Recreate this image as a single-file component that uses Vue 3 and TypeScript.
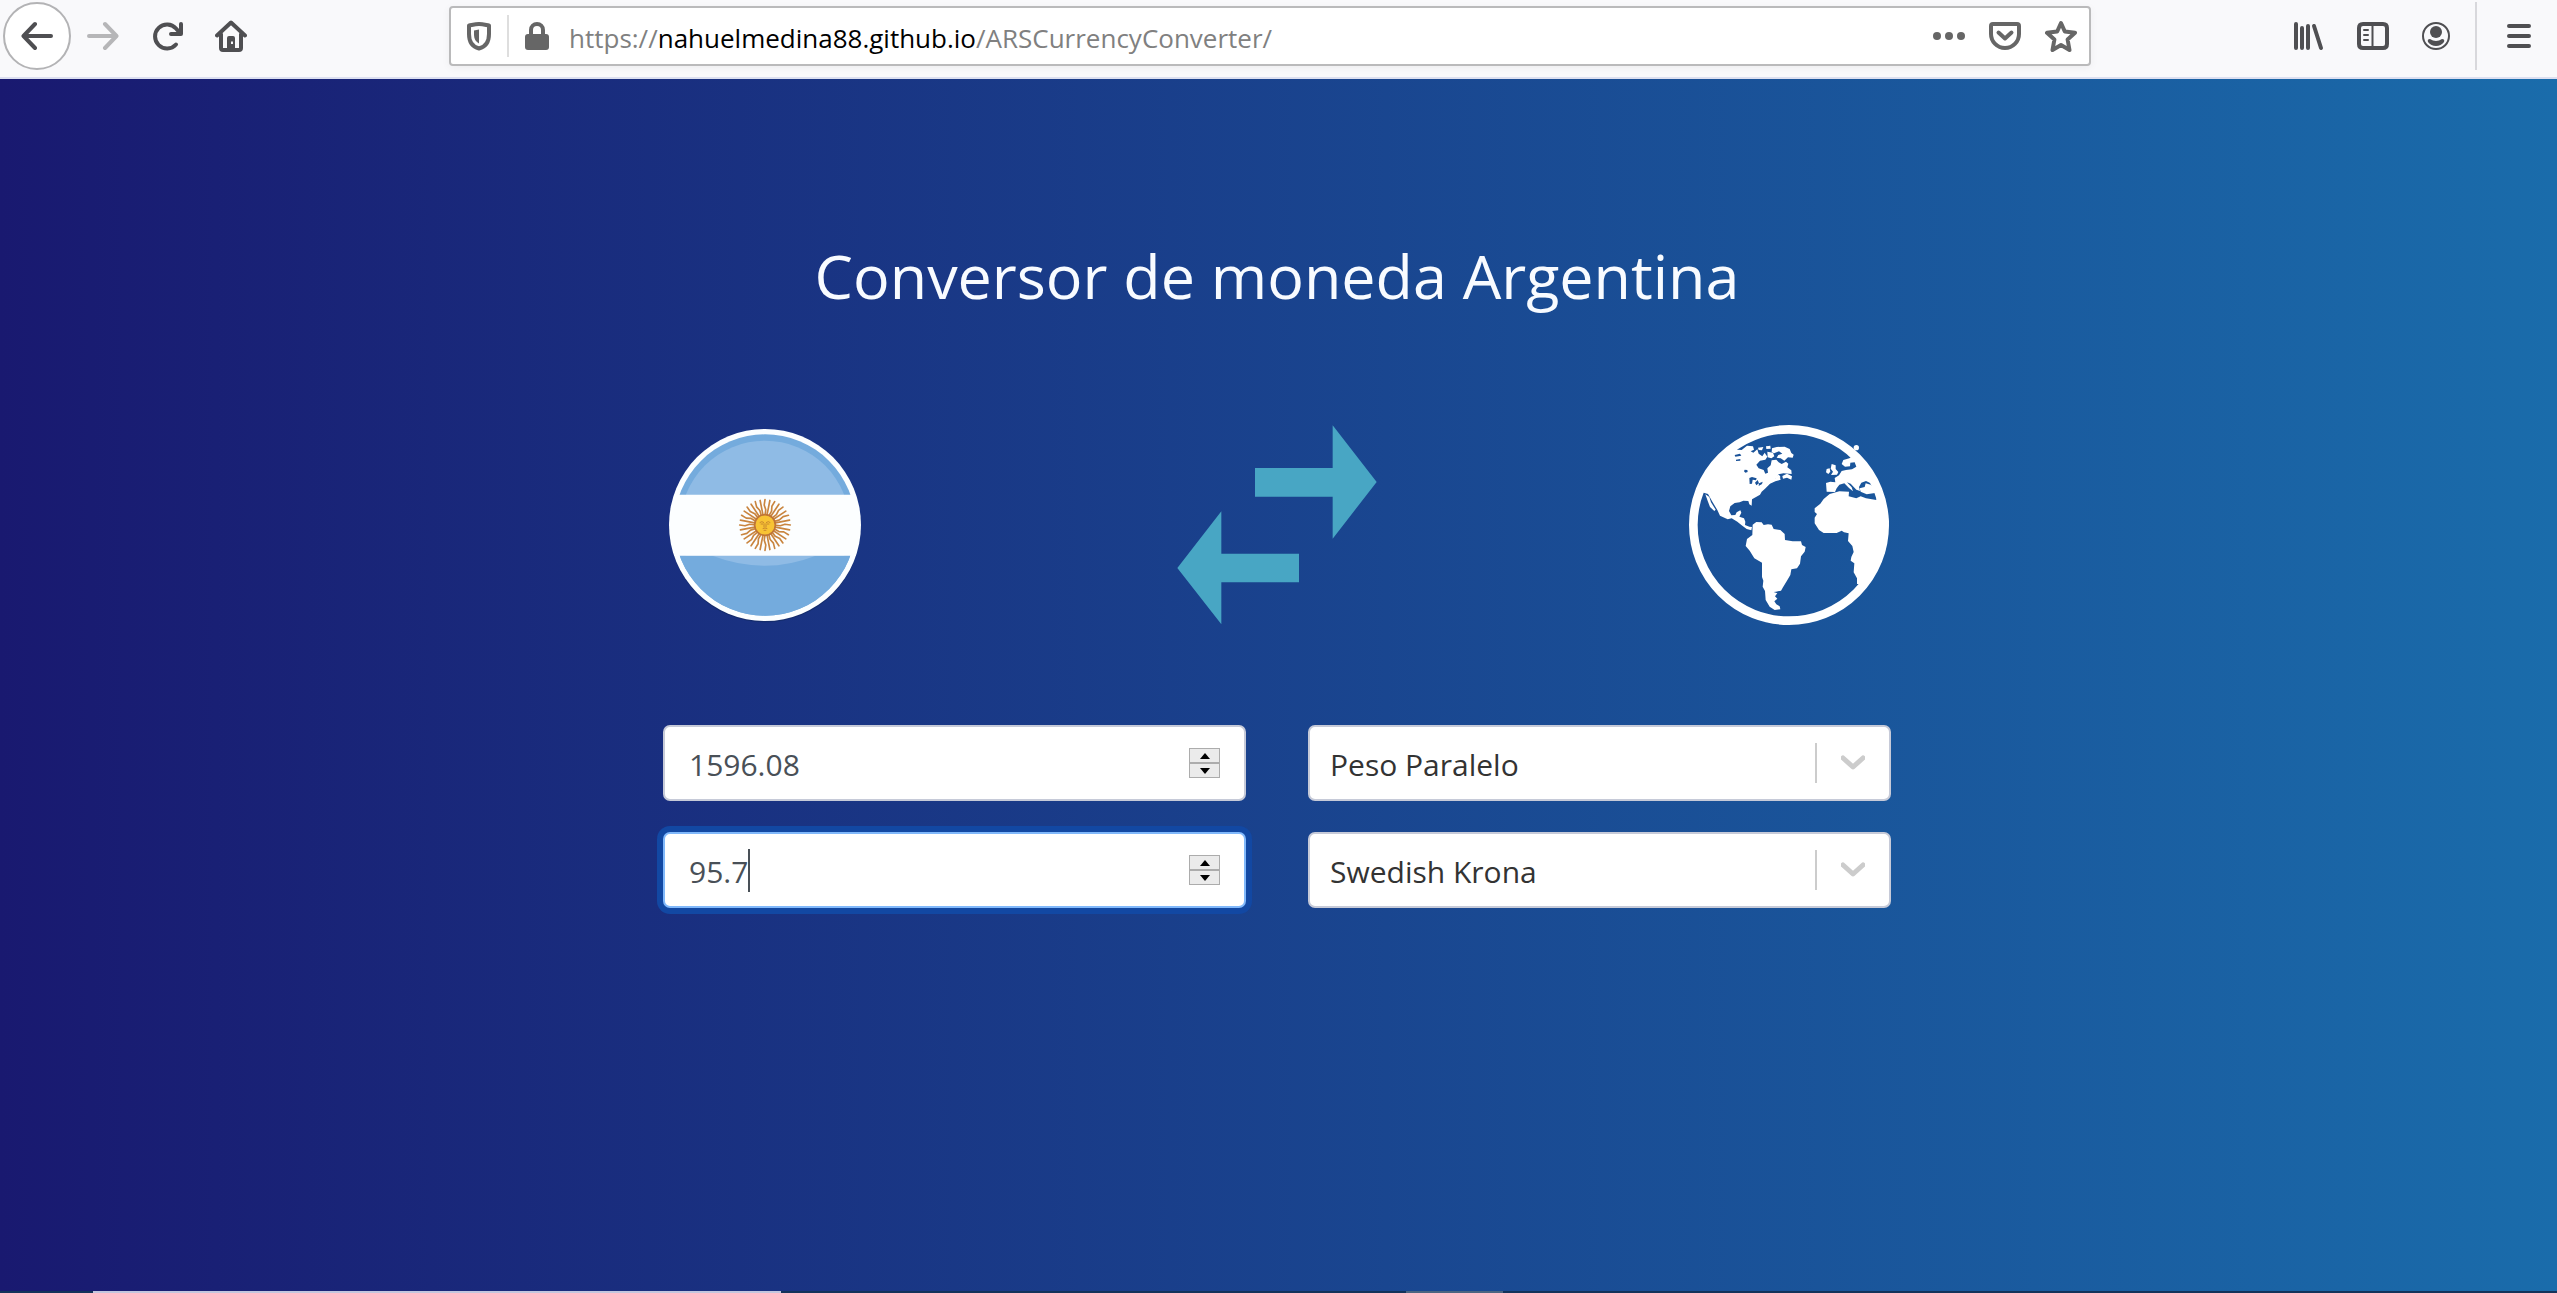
<script setup lang="ts">
import { ref } from 'vue'

interface AmountField {
  id: string
  label: string
  value: number
  focused: boolean
}

const amounts = ref<AmountField[]>([
  { id: 'amount-ars', label: 'Monto en pesos', value: 1596.08, focused: false },
  { id: 'amount-foreign', label: 'Monto en moneda extranjera', value: 95.7, focused: true },
])

const currencies = ref([
  { id: 'rate', label: 'Tipo de cambio', value: 'Peso Paralelo' },
  { id: 'currency', label: 'Moneda', value: 'Swedish Krona' },
])

function step(field: AmountField, delta: number) {
  field.value = Math.round((field.value + delta) * 100) / 100
}

// The sun's rays, alternating between straight and wavy ones.
const rays = Array.from({ length: 32 }, (_, i) => {
  const a = (i * Math.PI) / 16
  const b = a + 0.05
  const point = (r: number, t: number) => `${(346 + r * Math.cos(t)).toFixed(1)} ${(343 + r * Math.sin(t)).toFixed(1)}`
  return i % 2
    ? `M${point(28, a)}L${point(75, a)}`
    : `M${point(28, a)}L${point(46, b)}L${point(60, a - 0.04)}L${point(76, a)}`
}).join('')
</script>

<template>
  <div class="window">
    <header class="toolbar">
      <button class="back" type="button" aria-label="Back">
        <svg class="icon" viewBox="0 0 32 32"><path d="M14 4 2.500 16 14 28M3 16H30" /></svg>
      </button>
      <button class="tool disabled" type="button" aria-label="Forward">
        <svg class="icon" viewBox="0 0 32 32"><path d="M18 4 29.500 16 18 28M29 16H2" /></svg>
      </button>
      <button class="tool" type="button" aria-label="Reload">
        <svg class="icon" viewBox="0 0 32 32"><path d="M25 24.500A12 12 0 1 1 25 8.500L29 13M30 4V14H20" /></svg>
      </button>
      <button class="tool" type="button" aria-label="Home">
        <svg class="icon" viewBox="0 0 32 32">
          <path d="M2 15.500 16 2.500 30 15.500M6 14V28Q6 30 8 30H24Q26 30 26 28V14" />
          <path class="solid" d="M12 18Q12 16 14 16H18Q20 16 20 18V30H12ZM16 21.500V24H18V21.500Z" />
        </svg>
      </button>
      <div class="spacer"></div>
      <div class="urlbar">
        <svg class="icon" viewBox="0 0 32 32">
          <path d="M16 4C12 4 9 5 6 5.500V14C6 22 10 27 16 28.500C22 27 26 22 26 14V5.500C23 5 20 4 16 4Z" />
          <path class="solid" d="M16 9.500 11 10.500V15C11 19 13 22 16 23.500Z" />
        </svg>
        <span class="url-divider"></span>
        <svg class="icon" viewBox="0 0 32 32">
          <path class="solid" d="M4 17Q4 14 7 14H25Q28 14 28 17V27Q28 30 25 30H7Q4 30 4 27Z" />
          <path d="M10 15V10A6 6 0 0 1 22 10V15" />
        </svg>
        <p class="url">https://<strong>nahuelmedina88.github.io</strong>/ARSCurrencyConverter/</p>
        <div class="url-actions">
          <svg class="icon" viewBox="0 0 32 32">
            <circle class="solid" cx="4" cy="16" r="4" /><circle class="solid" cx="16" cy="16" r="4" /><circle class="solid" cx="28" cy="16" r="4" />
          </svg>
          <svg class="icon" viewBox="0 0 32 32">
            <path d="M4 4H28Q30 4 30 6V14A14 14 0 0 1 2 14V6Q2 4 4 4ZM9.500 12.500 16 18.500 22.500 12.500" />
          </svg>
          <svg class="icon" viewBox="0 0 32 32">
            <path d="M16 3 19.800 11.500 30 12.800 22.600 19.500 24.500 30 16 25 7.500 30 9.400 19.500 2 12.800 12.200 11.500Z" />
          </svg>
        </div>
      </div>
      <div class="spacer"></div>
      <button class="tool" type="button" aria-label="Library">
        <svg class="icon" viewBox="0 0 32 32"><path d="M3 4V28M9 8V28M15 6V28M21 6 28 28" /></svg>
      </button>
      <button class="tool" type="button" aria-label="Sidebars">
        <svg class="icon" viewBox="0 0 32 32">
          <path d="M6 4H26Q30 4 30 8V24Q30 28 26 28H6Q2 28 2 24V8Q2 4 6 4Z" />
          <path class="thin" d="M15.500 6V28M7 10H11M7 15H11M7 20H11" />
        </svg>
      </button>
      <button class="tool" type="button" aria-label="Account">
        <svg class="icon" viewBox="0 0 32 32">
          <circle class="thin" cx="15" cy="16" r="13" />
          <circle class="solid" cx="15" cy="12" r="6" />
          <path class="solid" d="M9 19Q15 23 21 19Q24 19 23 22Q20 26 15 26Q10 26 7 22Q6 19 9 19Z" />
        </svg>
      </button>
      <span class="tool-divider"></span>
      <button class="tool" type="button" aria-label="Menu">
        <svg class="icon" viewBox="0 0 32 32"><path d="M6 6H26M6 16H26M6 26H26" /></svg>
      </button>
    </header>

    <main class="page">
      <h1 class="title">Conversor de moneda Argentina</h1>
      <div class="converter">
        <div class="pictures">
          <svg class="picture" viewBox="46 43 600 600" aria-hidden="true">
            <defs>
              <clipPath id="disc"><circle cx="346" cy="343" r="272" /></clipPath>
            </defs>
            <circle cx="346" cy="348" r="287" fill="#10285f" opacity="0.6" />
            <circle cx="346" cy="343" r="288" fill="#fcfeff" />
            <g clip-path="url(#disc)">
              <path d="M60 60H640V640H60Z" fill="#74abdd" />
              <circle cx="346" cy="345" r="255" fill="#8fbbe5" />
              <path d="M60 435H640V640H60Z" fill="#74abdd" />
              <path d="M188 435Q346 495 498 435Z" fill="#8fbbe5" />
            </g>
            <path d="M73 252H619V435H73Z" fill="#fcfeff" />
            <path :d="rays" fill="none" stroke="#c9853f" stroke-width="5" stroke-linejoin="round" stroke-linecap="round" />
            <circle cx="346" cy="343" r="31" fill="#f8c334" stroke="#bf7536" stroke-width="5" />
            <path d="M330 336Q337 330 343 336M349 336Q356 330 362 336M333 340H340M352 340H359M343 338V350M349 338V350M339 354Q346 350 353 354M342 359H350" fill="none" stroke="#b06a2c" stroke-width="2" />
          </svg>
          <svg class="picture" viewBox="51 45 600 600" aria-hidden="true">
            <path d="M285 174H518V46L650 216 518 386V260H285ZM52 474 184 304V431H417V517H184V643Z" fill="#48a6c4" />
          </svg>
          <svg class="picture" viewBox="27 30 600 600" aria-hidden="true">
            <circle cx="327" cy="330" r="287" fill="none" stroke="#fff" stroke-width="26" />
            <g fill="#fff">
              <path fill-rule="evenodd" d="M66 232 70 190 110 130 150 100 172 104 185 105 201 92 219 94 222 104 212 109 220 113 232 103 236 116 247 124 254 113 262 125 256 134 240 137 229 149 236 160 251 165 256 176 264 173 262 160 272 151 275 136 289 134 296 142 305 147 318 140 325 146 322 157 334 166 335 177 310 175 296 178 286 190 299 185 302 194 286 199 270 206 255 221 245 230 240 239 216 253 215 272 208 268 205 258 190 257 179 262 164 264 151 274 147 288 154 301 166 300 170 292 181 286 184 293 178 305 192 310 196 320 195 330 208 335 216 336 214 346 200 342 184 330 172 320 155 310 143 313 120 302 112 285 98 262 84 237ZM194 164 202 165 203 171 196 173 192 169ZM208 189 216 186 230 190 228 196 218 194 216 206 209 207ZM225 203 233 195 237 205 229 211ZM237 205 248 200 246 207 236 213ZM164 120 180 116 184 122 166 125ZM168 134 181 132 181 137 168 138Z" />
              <path d="M76 238 88 246 93 262 107 284 103 288 90 276 84 260Z" />
              <path d="M276 100 290 96 314 95 329 102 334 114 341 119 338 128 324 127 313 137 302 130 290 128 295 120 307 116 297 109 282 115 275 111Z" />
              <path d="M234 98 250 96 246 106 236 105ZM258 94 271 92 272 101 259 102ZM262 110 279 113 283 124 274 130 263 127ZM307 183 321 176 336 184 334 194 321 188 309 191ZM282 184 297 179 302 187 288 191Z" />
              <path d="M218 329 229 321 245 322 251 330 264 328 275 329 281 342 301 345 314 357 315 375 338 379 363 379 366 390 377 396 374 410 363 424 360 446 351 460 334 463 331 480 320 499 309 517 303 527 288 530 281 531 292 535 285 544 292 551 283 559 289 568 299 574 301 583 284 585 269 575 257 555 255 528 248 515 250 497 246 486V443L223 430 209 407 197 393 201 372 217 360Z" />
              <path d="M431 252 449 237 478 229 507 230 506 244 529 250 542 244 558 250 589 255 590 246 585 234 560 238 542 230 539 220 554 216 557 205 572 209 579 216 574 198 610 240 627 320 615 410 588 470 544 507 531 507 531 490 521 472 523 445 512 437 514 426 521 411 517 393 504 378 506 355 492 352 485 347 470 354 431 354 417 345 404 325V308L411 297 404 291 404 280 421 266Z" />
              <path d="M490 135 508 130 527 120 560 150 590 190 600 235 577 207 558 198 544 203 537 216 540 228 529 224 512 206 501 202 515 217 519 229 507 219 493 205 478 209 470 220 465 231 440 230 438 204 451 200 466 202 464 189 477 181 485 168 498 165 516 163 529 155 524 142 511 143 510 154 495 155 485 147Z" />
              <path d="M455 147 467 151 467 162 475 171 471 179 453 180 459 170 452 161ZM440 162 449 160 451 170 445 177 438 172Z" />
              <circle cx="529" cy="98" r="8" />
            </g>
          </svg>
        </div>

        <form class="fields" @submit.prevent>
          <div class="column">
            <div v-for="field in amounts" :key="field.id" class="field amount" :class="{ focused: field.focused }">
              <input :id="field.id" v-model.number="field.value" class="control" type="number" step="any" :aria-label="field.label" />
              <span v-if="field.focused" class="caret"></span>
              <div class="spinner">
                <button type="button" aria-label="Aumentar" @click="step(field, 1)">
                  <svg viewBox="0 0 10 6"><path d="M0 6 5 0 10 6Z" /></svg>
                </button>
                <button type="button" aria-label="Disminuir" @click="step(field, -1)">
                  <svg viewBox="0 0 10 6"><path d="M0 0 5 6 10 0Z" /></svg>
                </button>
              </div>
            </div>
          </div>
          <div class="column">
            <div v-for="item in currencies" :key="item.id" class="field choice">
              <select :id="item.id" v-model="item.value" class="control" :aria-label="item.label">
                <option>{{ item.value }}</option>
              </select>
              <span class="separator"></span>
              <svg class="chevron" viewBox="0 0 24 16"><path d="M2 3 12 12 22 3" /></svg>
            </div>
          </div>
        </form>
      </div>
    </main>

    <footer class="taskbar">
      <span class="task active"></span>
      <span class="task"></span>
    </footer>
  </div>
</template>

<style>
body {
  margin: 0;
}
</style>

<style scoped>
.window {
  display: flex;
  flex-direction: column;
  min-height: 100vh;
  font-family: "Segoe UI", "Open Sans", "Noto Sans", sans-serif;
}

.toolbar {
  display: flex;
  align-items: center;
  box-sizing: border-box;
  height: 79px;
  padding: 0 6px 5px 3px;
  background: #f9f9fb;
  border-bottom: 2px solid #dcdff0;
}

button {
  display: flex;
  align-items: center;
  justify-content: center;
  flex: none;
  padding: 0;
  border: 0;
  background: none;
  color: #4f4f52;
}

.back {
  box-sizing: border-box;
  width: 68px;
  height: 68px;
  border: 2px solid #b3b3b5;
  border-radius: 50%;
  background: #fff;
}

.tool {
  width: 64px;
  height: 64px;
}

.disabled {
  color: #b6b6b8;
}

.icon {
  flex: none;
  width: 32px;
  height: 32px;
  fill: none;
  stroke: currentColor;
  stroke-width: 4;
  stroke-linecap: round;
  stroke-linejoin: round;
}

.solid {
  fill: currentColor;
  fill-rule: evenodd;
  stroke: none;
}

.thin {
  stroke-width: 2;
}

.spacer {
  width: 186px;
}

.urlbar {
  display: flex;
  flex: 1;
  align-items: center;
  box-sizing: border-box;
  height: 60px;
  padding: 0 12px;
  border: 2px solid #bababb;
  border-radius: 4px;
  background: #fff;
  box-shadow: 0 2px 8px rgba(0, 0, 0, 0.05);
  color: #666;
}

.url-divider {
  width: 2px;
  height: 42px;
  margin: 0 12px;
  background: #dedede;
}

.url {
  flex: 1;
  margin: 0 0 0 16px;
  padding-top: 4px;
  font-size: 26px;
  line-height: 40px;
  color: #808080;
}

.url strong {
  font-weight: 400;
  color: #000;
}

.url-actions {
  display: flex;
  gap: 24px;
}

.tool-divider {
  width: 2px;
  height: 68px;
  margin: 0 10px 0 6px;
  background: #d8d8dc;
}

.page {
  display: flex;
  flex: 1;
  flex-direction: column;
  align-items: center;
  padding-right: 3px;
  background: linear-gradient(to right, #191970, #1a6cab);
}

.title {
  margin: 148px 0 0;
  font-size: 61px;
  font-weight: 400;
  line-height: 98px;
  color: #f8fbff;
}

.converter {
  width: 100%;
  max-width: 1228px;
}

.pictures {
  display: flex;
  justify-content: space-between;
  margin-top: 100px;
  padding: 0 2px;
}

.picture {
  width: 200px;
  height: 200px;
}

.fields {
  display: grid;
  grid-template-columns: 1fr 1fr;
  gap: 62px;
  margin-top: 100px;
}

.column {
  display: flex;
  flex-direction: column;
  gap: 31px;
}

.field {
  position: relative;
  display: flex;
  align-items: center;
  box-sizing: border-box;
  height: 76px;
  border: 2px solid #c6cad8;
  border-radius: 7px;
  background: #fff;
}

.focused {
  border-color: #80b8fb;
  box-shadow: 0 0 0 6px #1248a3;
}

.control {
  flex: 1;
  min-width: 0;
  height: 100%;
  box-sizing: border-box;
  padding: 3px 0 0 24px;
  border: 0;
  outline: 0;
  background: none;
  appearance: none;
  font-family: inherit;
  font-size: 30px;
  color: #495057;
}

.choice .control {
  padding-left: 20px;
  color: #333;
}

input[type="number"] {
  appearance: textfield;
}

input::-webkit-outer-spin-button,
input::-webkit-inner-spin-button {
  appearance: none;
  margin: 0;
}

.caret {
  position: absolute;
  left: 83px;
  width: 2px;
  height: 43px;
  background: #495057;
}

.spinner {
  width: 31px;
  margin-right: 24px;
}

.spinner button {
  box-sizing: border-box;
  width: 100%;
  height: 15px;
  border: 1px solid #acacac;
  background: #ebebeb;
}

.spinner svg {
  width: 10px;
  height: 6px;
  fill: #000;
}

.separator {
  width: 2px;
  height: 40px;
  background: #ccc;
}

.chevron {
  width: 24px;
  height: 16px;
  margin: 0 24px;
  fill: none;
  stroke: #ccc;
  stroke-width: 5;
  stroke-linecap: round;
  stroke-linejoin: round;
}

.taskbar {
  display: flex;
  height: 2px;
  padding-left: 93px;
  background: #14335a;
}

.task {
  width: 97px;
  background: #4b6581;
}

.active {
  width: 688px;
  margin-right: 625px;
  background: #c3c6de;
}
</style>
